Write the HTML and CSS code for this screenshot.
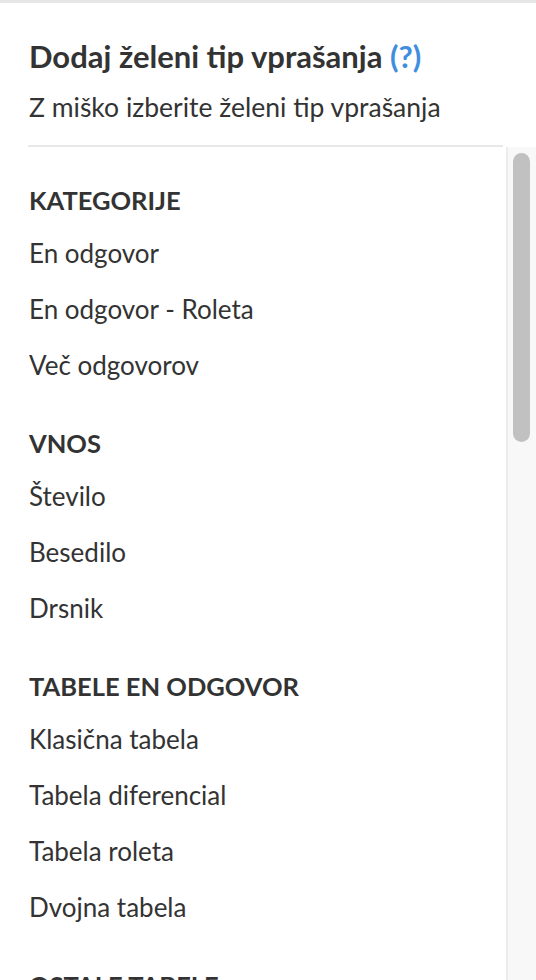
FILE: index.html
```html
<!DOCTYPE html>
<html lang="sl">
<head>
<meta charset="utf-8">
<title>Dodaj želeni tip vprašanja</title>
<link rel="stylesheet" href="styles.css">
</head>
<body>
<div class="panel">
  <header class="head">
    <h1 class="title">Dodaj želeni tip vprašanja <span class="help">(?)</span></h1>
    <p class="subtitle">Z miško izberite želeni tip vprašanja</p>
  </header>
  <div class="body">
    <div class="list">
      <section class="group">
        <h2 class="group-title">KATEGORIJE</h2>
        <ul class="items">
          <li>En odgovor</li>
          <li>En odgovor - Roleta</li>
          <li>Več odgovorov</li>
        </ul>
      </section>
      <section class="group">
        <h2 class="group-title">VNOS</h2>
        <ul class="items">
          <li>Število</li>
          <li>Besedilo</li>
          <li>Drsnik</li>
        </ul>
      </section>
      <section class="group">
        <h2 class="group-title">TABELE EN ODGOVOR</h2>
        <ul class="items">
          <li>Klasična tabela</li>
          <li>Tabela diferencial</li>
          <li>Tabela roleta</li>
          <li>Dvojna tabela</li>
        </ul>
      </section>
      <section class="group">
        <h2 class="group-title">OSTALE TABELE</h2>
      </section>
    </div>
    <div class="scrollbar" aria-hidden="true">
      <div class="thumb"></div>
    </div>
  </div>
</div>
</body>
</html>
```
FILE: styles.css
```css
* { box-sizing: border-box; }
html, body { margin: 0; padding: 0; height: 100%; }
body {
  background: #ffffff;
  color: #333333;
  font-family: "Lato", "Noto Sans", sans-serif;
  overflow: hidden;
}
.panel {
  height: 980px;
  display: flex;
  flex-direction: column;
  border-top: 3px solid #e6e6e6;
}
.head {
  padding: 0 0 0 29px;
}
.title {
  margin: 0;
  padding-top: 37px;
  font-size: 31px;
  line-height: 32px;
  font-weight: 700;
  color: #333333;
  white-space: nowrap;
}
.help { color: #3f8ee0; }
.subtitle {
  margin: 0;
  padding-top: 20px;
  font-size: 26.5px;
  line-height: 30px;
  font-weight: 400;
  padding-bottom: 23px;
  white-space: nowrap;
}
.body {
  flex: 1;
  min-height: 0;
  display: flex;
  gap: 3px;
}
.list {
  flex: 1;
  min-width: 0;
  margin-left: 28px;
  border-top: 2px solid #e8e8e8;
  overflow: hidden;
  padding: 36px 0 0 1px;
}
.scrollbar {
  width: 30px;
  flex: none;
  margin-top: 2px;
  background: #f8f8f8;
  border-left: 2px solid #ececec;
  padding: 6px 6px 0 5px;
}
.thumb {
  height: 289px;
  border-radius: 9px;
  background: #c1c1c1;
}
.group { margin-bottom: 45px; }
.group-title {
  margin: 0;
  font-size: 25.5px;
  line-height: 34px;
  font-weight: 700;
  white-space: nowrap;
}
.items {
  list-style: none;
  margin: 0;
  padding: 0;
}
.items li {
  font-size: 26px;
  line-height: 32px;
  margin-top: 24px;
  white-space: nowrap;
}
.items li:first-child { margin-top: 20px; }
```
